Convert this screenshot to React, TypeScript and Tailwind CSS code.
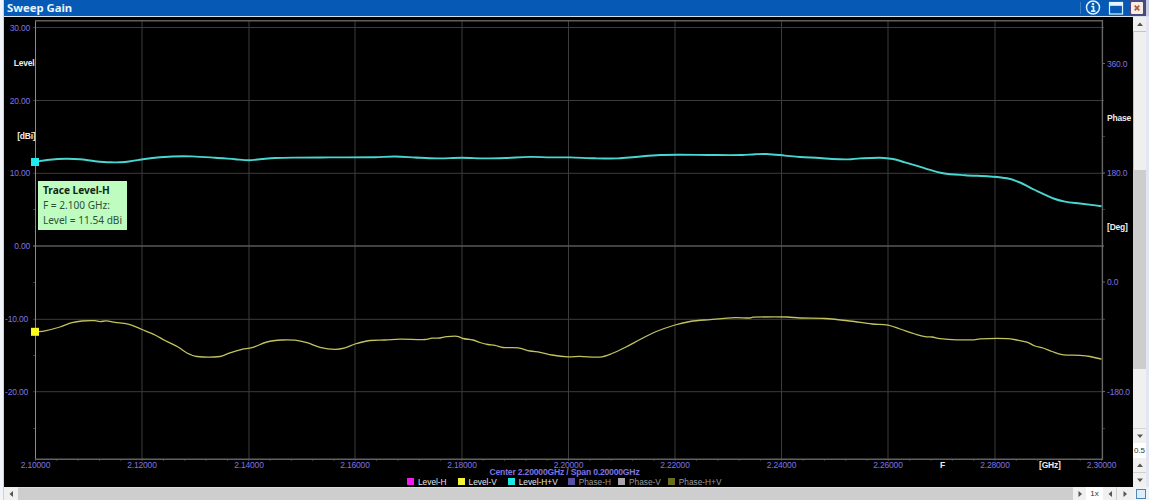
import type { ReactNode } from "react";

const X_TICKS = [
  { x: 35.5, label: "2.10000" },
  { x: 142, label: "2.12000" },
  { x: 249, label: "2.14000" },
  { x: 355, label: "2.16000" },
  { x: 462, label: "2.18000" },
  { x: 568.5, label: "2.20000" },
  { x: 675, label: "2.22000" },
  { x: 781.5, label: "2.24000" },
  { x: 888, label: "2.26000" },
  { x: 995, label: "2.28000" },
  { x: 1101.5, label: "2.30000" },
];

const LEVEL_TICKS = [
  { y: 27.5, label: "30.00", end: 30 },
  { y: 100.5, label: "20.00", end: 30 },
  { y: 173.3, label: "10.00", end: 30 },
  { y: 246, label: "0.00", end: 30 },
  { y: 319.3, label: "-10.00", end: 28 },
  { y: 391.7, label: "-20.00", end: 28 },
];

const PHASE_TICKS = [
  { y: 63.5, label: "360.0" },
  { y: 173, label: "180.0" },
  { y: 282, label: "0.0" },
  { y: 391.5, label: "-180.0" },
];

const LEVEL_HV =
  "35.5,161.7 47,160 58,159 67,158.7 80,159.3 95,161.2 110,162.3 125,162 140,159.7 155,157.8 172,156.5 192,156.4 215,157.7 235,159.2 249,160.2 262,159 275,158 295,157.6 330,157.4 375,157.2 395,156.5 415,157.5 430,158.3 440,158.4 462,157.8 485,158.4 505,158 530,156.9 550,157.4 570,157.4 595,158.3 618,158.4 635,157 660,155 680,154.7 710,155 742,155 755,154.2 767,154 785,155.6 800,157 820,158 832,159 848,159.4 860,158.4 880,157.7 893,159 905,162.4 925,168.3 943,173.2 965,175.2 990,176.5 1007,178.3 1020,182.5 1035,190 1055,199 1065,201.6 1080,203.5 1101.5,206.2";

const LEVEL_V =
  "35.5,332 45,330.8 60,327 72,322.7 82,321 95,320.7 100,321.6 106,320.9 115,322.3 130,324.7 142,329.5 155,335 165,340.5 178,347 187,353 197,356.5 220,356.5 230,352.8 242,349.4 252,347.7 267,342 282,340 295,340.2 307,342.7 320,347.3 335,349.3 345,347.8 355,344 370,340.5 385,340 400,339.1 425,339.5 432,338.2 440,338 445,336.9 457,336.3 463,338.5 473,340 480,342.5 488,344.5 495,345.3 503,347.5 518,347.9 530,351 540,352.3 552,355 568,356.8 580,356.3 600,357.1 612,353.5 625,347.5 640,339.5 655,332 675,325 690,321.5 710,319.6 735,317.7 750,318 753,317.2 787,317 800,318 825,318.5 850,321 872,324 888,325.2 900,329 915,334 925,336.7 932,337 940,338.6 957,339.8 974,339.8 980,338.8 1007,338.6 1017,340 1027,342.2 1035,346 1043,348 1052,351.5 1062,354.6 1080,355.4 1090,356.5 1101.5,359.2";

const LEGEND = [
  { label: "Level-H", swatch: "bg-[#f01af0]", text: "mr-[11px] text-[#e8e8e8]" },
  { label: "Level-V", swatch: "bg-[#f4f436]", text: "mr-[11px] text-[#e8e8e8]" },
  { label: "Level-H+V", swatch: "bg-[#1fe6e6]", text: "mr-[10px] text-[#e8e8e8]" },
  { label: "Phase-H", swatch: "bg-[#5850a0]", text: "mr-[7px] text-[#999999]" },
  { label: "Phase-V", swatch: "bg-[#aaa6ac]", text: "mr-[7px] text-[#999999]" },
  { label: "Phase-H+V", swatch: "bg-[#6c6c1e]", text: "text-[#999999]" },
];

const MINOR_X = Array.from({ length: 51 }, (_, i) => 35.5 + i * 21.32);
const MINOR_LEFT = [64, 137, 209.5, 282.5, 355.5, 428.5];
const MINOR_RIGHT = [136.5, 209.5, 319.3, 428.5];

// Bezier curve through every point, with horizontal distance scaling the tangents
function smoothPath(source: string) {
  const pts = source.split(" ").map((p) => p.split(",").map(Number));
  const slope = (i: number) => {
    const a = pts[Math.max(i - 1, 0)];
    const b = pts[Math.min(i + 1, pts.length - 1)];
    return (b[1] - a[1]) / (b[0] - a[0]);
  };
  return pts.slice(1).reduce((d, [x, y], i) => {
    const [px, py] = pts[i];
    const dx = (x - px) / 3;
    return `${d} C${px + dx} ${py + slope(i) * dx} ${x - dx} ${y - slope(i + 1) * dx} ${x} ${y}`;
  }, `M${pts[0][0]} ${pts[0][1]}`);
}

type Direction = "up" | "down" | "left" | "right";

const ARROWS: Record<Direction, string> = {
  up: "M0 5 L3 1.5 L6 5 Z",
  down: "M0 1.5 L3 5 L6 1.5 Z",
  left: "M5 0 L1.5 3 L5 6 Z",
  right: "M1.5 0 L5 3 L1.5 6 Z",
};

function Arrow({ direction }: { direction: Direction }) {
  return (
    <svg viewBox="0 0 6 6" className="h-1.5 w-1.5">
      <path d={ARROWS[direction]} fill="#555" />
    </svg>
  );
}

function ScrollCell({ className, children }: { className: string; children?: ReactNode }) {
  return <div className={`flex shrink-0 items-center justify-center ${className}`}>{children}</div>;
}

function TitleBar() {
  return (
    <header className="flex h-4 shrink-0 items-center justify-between bg-[#065ab5] pl-[3px]">
      <h1 className="font-['Noto_Sans','Open_Sans',sans-serif] text-[11.3px] leading-4 font-bold text-[#e8f4fc]">
        Sweep Gain
      </h1>
      <div className="flex h-full items-center">
        <span className="mr-1 h-3 w-px bg-[#3c7cc0]" />
        <svg viewBox="0 0 16 16" className="mr-[7px] h-4 w-4" fill="none">
          <circle cx="8" cy="7.5" r="6.5" stroke="#d8f2fa" strokeWidth="1.5" />
          <path d="M6.2 6.5H8.5V11M6 11.2H10.4" stroke="#d8f2fa" strokeWidth="1.7" />
          <rect x="6.9" y="3" width="2.2" height="1.9" fill="#d8f2fa" />
        </svg>
        <svg viewBox="0 0 16 14" className="mr-[6px] h-3.5 w-4" fill="none">
          <rect x="1.5" y="1.5" width="13" height="11.5" stroke="#d8f2fa" strokeWidth="1.2" />
          <path d="M1 1H15V4.8H1Z" fill="#e6f7fc" />
        </svg>
        <div className="flex h-full w-4 items-center bg-[#4a4a80] pl-px">
          <svg viewBox="0 0 12 12" className="h-3 w-3">
            <rect width="12" height="12" rx="1" fill="#f7ede4" />
            <path d="M3.7 3.7L8.3 8.3M8.3 3.7L3.7 8.3" stroke="#b05a3c" strokeWidth="1.8" />
          </svg>
        </div>
        <span className="h-full w-[3px] bg-[#c9cfe2]" />
      </div>
    </header>
  );
}

function Chart() {
  return (
    <svg
      viewBox="4 17 1129 460"
      className="block h-[460px] w-[1129px] font-['Liberation_Sans',Arial,sans-serif] text-[8.5px] tracking-[-0.2px]"
    >
      {/* Grid */}
      <g stroke="#3c3c3c" strokeWidth="1">
        {X_TICKS.slice(1, -1).map((t) => (
          <line key={t.label} x1={t.x} x2={t.x} y1="21" y2="460" />
        ))}
        {LEVEL_TICKS.map((t) => (
          <line
            key={t.label}
            x1="33"
            x2="1104"
            y1={t.y}
            y2={t.y}
            stroke={t.label === "0.00" ? "#585858" : "#3c3c3c"}
            strokeWidth={t.label === "0.00" ? 1.4 : 1}
          />
        ))}
        {MINOR_LEFT.map((y) => (
          <line key={y} x1="33" x2="35" y1={y} y2={y} />
        ))}
        {MINOR_RIGHT.map((y) => (
          <line key={y} x1="1102" x2="1105" y1={y} y2={y} />
        ))}
        {PHASE_TICKS.map((t) => (
          <line key={t.label} x1="1102" x2="1105" y1={t.y} y2={t.y} stroke="#666" />
        ))}
        {MINOR_X.map((x) => (
          <line key={x} x1={x} x2={x} y1="459" y2="461" />
        ))}
      </g>
      <path d="M35.5 20V459.5" stroke="#8a8a8a" />
      <path d="M35 20.8H1103" stroke="#625e5c" strokeWidth="1.5" />
      <path d="M35 459.3H1103" stroke="#626262" strokeWidth="1.5" />
      <path d="M1102.4 20V460" stroke="#686868" strokeWidth="1.4" />

      {/* Axis labels */}
      <g fill="#7d74e0">
        {LEVEL_TICKS.map((t) => (
          <text key={t.label} x={t.end} y={t.y + 3} textAnchor="end">
            {t.label}
          </text>
        ))}
        {PHASE_TICKS.map((t) => (
          <text key={t.label} x="1107" y={t.y + 3}>
            {t.label}
          </text>
        ))}
        {X_TICKS.map((t) => (
          <text key={t.label} x={t.x} y="468" textAnchor="middle">
            {t.label}
          </text>
        ))}
        <text x="489.5" y="475.3" fontWeight="bold" textLength="150" lengthAdjust="spacingAndGlyphs">
          Center 2.20000GHz / Span 0.20000GHz
        </text>
      </g>
      <g fill="#ececec" fontWeight="bold">
        <text x="34.5" y="66.3" textAnchor="end">Level</text>
        <text x="35.5" y="139.3" textAnchor="end">[dBi]</text>
        <text x="1107" y="121.3">Phase</text>
        <text x="1107" y="230.3">[Deg]</text>
        <text x="940" y="468">F</text>
        <text x="1039" y="468">[GHz]</text>
      </g>

      {/* Traces and their markers */}
      <path d={smoothPath(LEVEL_HV)} fill="none" stroke="#48d6d0" strokeWidth="1.9" />
      <path d={smoothPath(LEVEL_V)} fill="none" stroke="#c2c25e" strokeWidth="1.3" />
      <rect x="31" y="158" width="8" height="8" fill="#1eeaf0" />
      <rect x="31" y="327.8" width="8" height="8" fill="#fafa20" />
    </svg>
  );
}

function Legend() {
  return (
    <div className="flex h-[10px] items-center pl-[403px] font-['Liberation_Sans',Arial,sans-serif] text-[8.3px] leading-[10px]">
      {LEGEND.map((item) => (
        <div key={item.label} className="flex items-center gap-1">
          <span className={`mb-px h-[7px] w-[7px] ${item.swatch}`} />
          <span className={item.text}>{item.label}</span>
        </div>
      ))}
    </div>
  );
}

function TraceTooltip() {
  return (
    <div className="absolute top-[164px] left-[34px] h-[49px] w-[89px] bg-[#befcc0] pt-[2px] pl-[5px] font-['Noto_Sans','Open_Sans',sans-serif] text-[10.1px] leading-[15px] whitespace-nowrap text-[#2e5034]">
      <p className="font-bold text-[#102814]">Trace Level-H</p>
      <p>F = 2.100 GHz:</p>
      <p>Level = 11.54 dBi</p>
    </div>
  );
}

function VerticalScrollbar() {
  return (
    <div className="flex w-[13px] shrink-0 flex-col bg-[#f0f0f0] font-['Liberation_Sans',Arial,sans-serif] text-[8px] text-[#333]">
      <ScrollCell className="h-[14px]">
        <Arrow direction="up" />
      </ScrollCell>
      <div className="h-[139px] border-t border-l border-[#c4c4c4] bg-[#efefef]" />
      <div className="h-[199px] bg-[#cdcdcd]" />
      <div className="h-[60px] border-b border-[#d4d4d4] bg-[#f0f0f0]" />
      <ScrollCell className="h-[14px]">
        <Arrow direction="down" />
      </ScrollCell>
      <ScrollCell className="h-[15px] bg-white">0.5</ScrollCell>
      <ScrollCell className="h-[15px] border-b border-[#d0d0d0]">
        <Arrow direction="up" />
      </ScrollCell>
      <ScrollCell className="h-[14px]">
        <Arrow direction="down" />
      </ScrollCell>
    </div>
  );
}

function HorizontalScrollbar() {
  return (
    <div className="flex h-[13px] shrink-0 bg-[#f0f0f0] font-['Liberation_Sans',Arial,sans-serif] text-[8px] text-[#333]">
      <ScrollCell className="w-[14px]">
        <Arrow direction="left" />
      </ScrollCell>
      <div className="flex-1 border-t border-[#dedede] bg-[#cecece]" />
      <ScrollCell className="w-[13px]">
        <Arrow direction="right" />
      </ScrollCell>
      <ScrollCell className="w-[17px] bg-white">1x</ScrollCell>
      <ScrollCell className="w-[14px] border-r border-[#d0d0d0]">
        <Arrow direction="left" />
      </ScrollCell>
      <ScrollCell className="w-[16px]">
        <Arrow direction="right" />
      </ScrollCell>
      <ScrollCell className="w-4 bg-[#eef3f8]">
        <span className="mr-px h-[10px] w-[10px] border border-[#4c86b8] bg-[#dceefa]" />
      </ScrollCell>
    </div>
  );
}

export default function App() {
  return (
    <div className="flex h-[500px] w-[1149px] overflow-hidden bg-[#e9edf5]">
      <div className="w-1 shrink-0 border-r border-[#cdd2dc] bg-[#f1f4fa]" />
      <div className="flex flex-1 flex-col">
        <TitleBar />
        <div className="h-px shrink-0 bg-[#d8e2ec]" />
        <div className="flex h-[470px] shrink-0">
          <div className="relative w-[1129px] bg-black">
            <Chart />
            <Legend />
            <TraceTooltip />
          </div>
          <VerticalScrollbar />
          <div className="w-[3px] bg-[#e3e6f0]" />
        </div>
        <HorizontalScrollbar />
      </div>
    </div>
  );
}
